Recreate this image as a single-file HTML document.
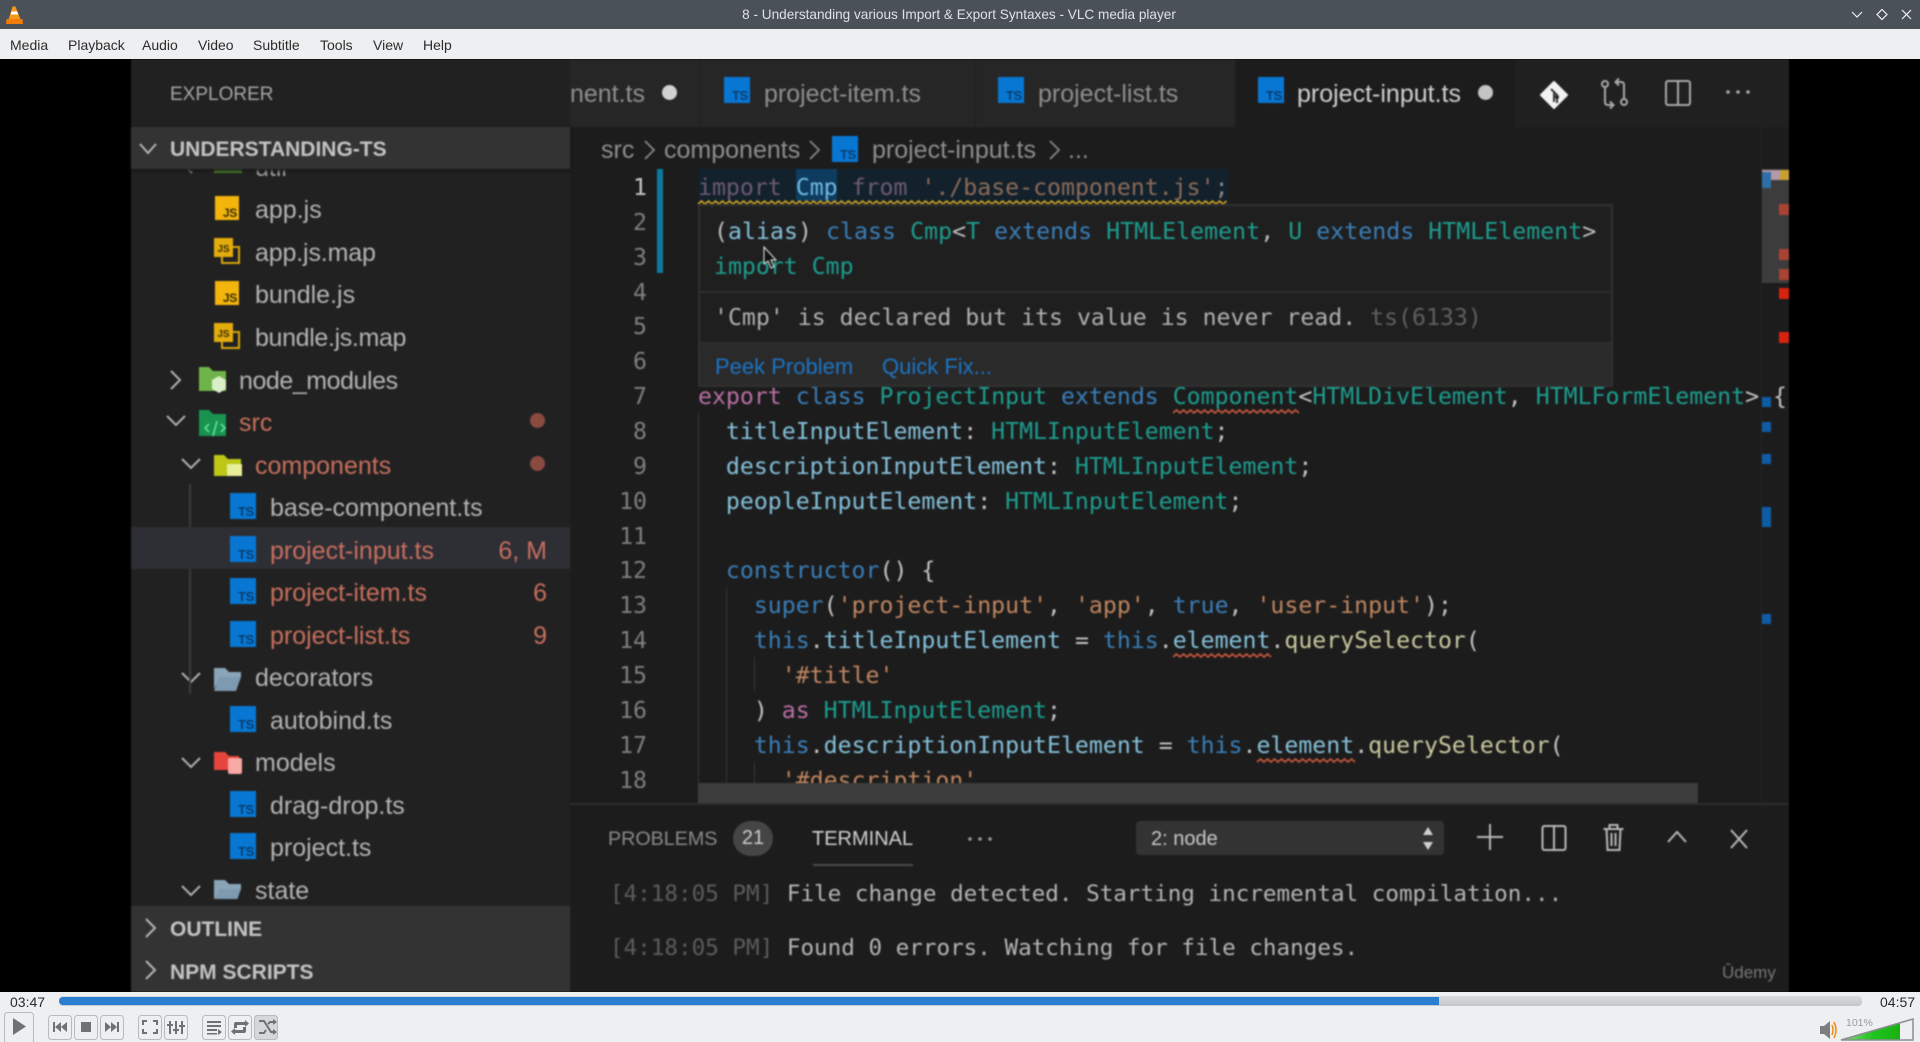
<!DOCTYPE html>
<html><head><meta charset="utf-8"><title>VLC media player</title>
<style>
html,body{margin:0;padding:0;width:1920px;height:1042px;overflow:hidden;background:#eeeff1}
*{box-sizing:border-box}
.a{position:absolute;white-space:pre}
body{font-family:"Liberation Sans",sans-serif;position:relative}
#tb{left:0;top:0;width:1920px;height:29px;background:#4a5159}
#mb{left:0;top:29px;width:1920px;height:30px;background:#eeeff1}
.m{top:37px;font-size:14px;line-height:16px;color:#2c2c2c}
#vid{left:0;top:59px;width:1920px;height:933px;background:#000;overflow:hidden}
#in{left:0;top:-59px;width:1920px;height:1042px;filter:blur(.7px)}
.s{font-size:25px;line-height:34px;color:#b3b3b3;transform:translateY(1px)}
.e{color:#c76f5d}
.h{font-size:21px;line-height:30px;font-weight:bold;color:#c4c4c4;transform:translateY(2px)}
.c{font-family:"DejaVu Sans Mono",monospace;font-size:23.2px;line-height:34px;left:698px;color:#c4c4c4;transform:translateY(2px)}
.n{font-family:"DejaVu Sans Mono",monospace;font-size:23.2px;line-height:34px;color:#7f7f7f;width:60px;left:587px;text-align:right;transform:translateY(2px)}
.ts{position:absolute;width:26px;height:26px;background:#0877d3}
.ts b{position:absolute;right:2px;bottom:0;font:bold 13px/15px "Liberation Sans",sans-serif;color:#083d6e;letter-spacing:-.3px}
.js{position:absolute;width:24px;height:24px;background:#f3b50c}
.js b{position:absolute;right:2px;bottom:0;font:bold 12px/14px "Liberation Sans",sans-serif;color:#3a2e05;letter-spacing:-.3px}
.jm{position:absolute;width:26px;height:26px}
.jm i{position:absolute;left:7px;top:8px;width:19px;height:18px;border:2px solid #d9a50e}
.jm u{position:absolute;left:0;top:0;width:19px;height:19px;background:#e3ac0d;text-decoration:none;font:bold 10px/24px "Liberation Sans",sans-serif;color:#3a2e05;text-align:center}
.k{color:#b96fa3}.b{color:#3a7eb8}.t{color:#1d9d8f}.v{color:#84c0da}.q{color:#bf8560}.f{color:#c9c9a0}
.tab{font-size:25px;line-height:34px;color:#8f8f8f;transform:translateY(1px)}
.bc{font-size:25px;line-height:34px;color:#8e8e8e;transform:translateY(1px)}
.pn{font-size:19.7px;line-height:24px;color:#8a8a8a;transform:translateY(1px)}
.tm{font-family:"DejaVu Sans Mono",monospace;font-size:22.6px;line-height:30px;left:610px;color:#b5b5b5}
.tm span{color:#5c5c5c}
</style></head><body>
<div class="a" id="tb"></div>
<div class="a" id="mb"></div>
<svg class="a" style="left:6px;top:6px" width="17" height="18" viewBox="0 0 17 18"><path d="M6.5 0.5h3l5 13h-12z" fill="#f39a1e"/><path d="M5.6 5.5h5.6l1 3h-7.6z" fill="#fff"/><path d="M0.5 13h16l.5 5H0z" fill="#f07c0a"/></svg>
<div class="a" style="left:740px;top:6px;width:438px;text-align:center;font-size:13.6px;line-height:17px;color:#dfe1e3">8 - Understanding various Import &amp; Export Syntaxes - VLC media player</div>
<svg class="a" style="left:1840px;top:0" width="80" height="29" fill="none" stroke="#f0f0f0" stroke-width="1.2"><path d="M12 12l5 5 5-5"/><path d="M42 9.5l5 5-5 5-5-5z"/><path d="M62 10l9 9M71 10l-9 9"/></svg>
<div class="a m" style="left:10px">Media</div><div class="a m" style="left:68px">Playback</div><div class="a m" style="left:142px">Audio</div><div class="a m" style="left:198px">Video</div><div class="a m" style="left:253px">Subtitle</div><div class="a m" style="left:320px">Tools</div><div class="a m" style="left:373px">View</div><div class="a m" style="left:423px">Help</div>

<div class="a" id="vid"><div class="a" id="in">
<!-- sidebar -->
<div class="a" style="left:131px;top:59px;width:439px;height:933px;background:#212121"></div>
<div class="a" style="left:570px;top:59px;width:1219px;height:933px;background:#1c1c1c"></div>
<div class="a" style="left:570px;top:59px;width:1219px;height:68px;background:#262626"></div>
<div class="a" style="left:700px;top:59px;width:1px;height:68px;background:#1f1f1f"></div>
<div class="a" style="left:975px;top:59px;width:1px;height:68px;background:#1f1f1f"></div>
<div class="a" style="left:1235px;top:59px;width:280px;height:68px;background:#1c1c1c"></div>
<div class="a" style="left:1515px;top:59px;width:274px;height:68px;background:#202020"></div>
<div class="a" style="left:170px;top:79px;font-size:19px;line-height:28px;color:#a6a6a6;transform:translateY(2px)">EXPLORER</div>

<!-- tree -->
<div class="a s" style="left:255px;top:150px;color:#a0a0a0">util</div>
<div class="a" style="left:214px;top:165px;width:28px;height:8px;background:#4d8a2e"></div>
<div class="js" style="left:215px;top:196px"><b>JS</b></div><div class="a s" style="left:255px;top:192px">app.js</div>
<div class="jm" style="left:214px;top:238px"><i></i><u>JS</u></div><div class="a s" style="left:255px;top:235px;letter-spacing:-.15px">app.js.map</div>
<div class="js" style="left:215px;top:281px"><b>JS</b></div><div class="a s" style="left:255px;top:277px">bundle.js</div>
<div class="jm" style="left:214px;top:323px"><i></i><u>JS</u></div><div class="a s" style="left:255px;top:320px;letter-spacing:-.35px">bundle.js.map</div>
<svg class="a" style="left:131px;top:59px" width="130" height="840" viewBox="131 59 130 840" fill="none" stroke="#b0b0b0" stroke-width="2">
<path d="M187 168l5 5" stroke="#8a8a8a"/>
<path d="M171 371l9 9-9 9"/><path d="M167 416l9 9 9-9"/><path d="M182 459l9 9 9-9"/><path d="M182 673l9 9 9-9"/><path d="M182 758l9 9 9-9"/><path d="M182 886l9 9 9-9"/>
<path d="M190 484v210" stroke="#3c3c3c" stroke-width="2"/>
<path d="M199 367h10l4 4h13v20h-27z" fill="#6fb44a" stroke="none"/><path d="M219 376l7 4v9l-7 4-7-4v-9z" fill="#d9efc8" stroke="none"/>
<path d="M199 410h10l4 4h13v22h-27z" fill="#19934f" stroke="none"/><path d="M209 424l-4 4 4 4M221 424l4 4-4 4M217 421l-4 15" stroke="#5fe39a" stroke-width="1.6"/>
<path d="M214 455h10l4 4h13v17h-27z" fill="#bcc716" stroke="none"/><rect x="227" y="464" width="15" height="12" fill="#e9ee9a" stroke="none"/>
<path d="M214 668h11l4 4h12v5h-21l-6 12z" fill="#8aa5b8" stroke="none"/><path d="M219 677h22l-5 14h-22z" fill="#7e9ab0" stroke="none"/>
<path d="M214 752h11l4 4h10v14h-25z" fill="#e5453c" stroke="none"/><rect x="228" y="758" width="14" height="16" rx="2" fill="#f7a9a3" stroke="none"/>
<path d="M214 880h11l4 4h12v5h-21l-6 12z" fill="#8aa5b8" stroke="none"/><path d="M219 889h22l-5 14h-22z" fill="#7e9ab0" stroke="none"/>
</svg>
<div class="a s" style="left:239px;top:363px;letter-spacing:-.45px">node_modules</div>
<div class="a s e" style="left:239px;top:405px">src</div>
<div class="a s e" style="left:255px;top:448px">components</div>
<div class="a" style="left:530px;top:413px;width:15px;height:15px;border-radius:50%;background:#8a4a40"></div>
<div class="a" style="left:530px;top:456px;width:15px;height:15px;border-radius:50%;background:#8a4a40"></div>
<div class="a" style="left:131px;top:527px;width:439px;height:42px;background:#2e2e35"></div>
<div class="ts" style="left:230px;top:493px"><b>TS</b></div><div class="a s" style="left:270px;top:490px">base-component.ts</div>
<div class="ts" style="left:230px;top:536px"><b>TS</b></div><div class="a s e" style="left:270px;top:533px">project-input.ts</div>
<div class="ts" style="left:230px;top:578px"><b>TS</b></div><div class="a s e" style="left:270px;top:575px">project-item.ts</div>
<div class="ts" style="left:230px;top:621px"><b>TS</b></div><div class="a s e" style="left:270px;top:618px">project-list.ts</div>
<div class="a s e" style="right:1373px;top:533px">6, M</div>
<div class="a s e" style="right:1373px;top:575px">6</div>
<div class="a s e" style="right:1373px;top:618px">9</div>
<div class="a s" style="left:255px;top:660px">decorators</div>
<div class="ts" style="left:230px;top:706px"><b>TS</b></div><div class="a s" style="left:270px;top:703px">autobind.ts</div>
<div class="a s" style="left:255px;top:745px">models</div>
<div class="ts" style="left:230px;top:791px"><b>TS</b></div><div class="a s" style="left:270px;top:788px">drag-drop.ts</div>
<div class="ts" style="left:230px;top:833px"><b>TS</b></div><div class="a s" style="left:270px;top:830px">project.ts</div>
<div class="a s" style="left:255px;top:873px">state</div>
<div class="a" style="left:131px;top:127px;width:439px;height:42px;background:#333;box-shadow:0 2px 3px #161616"></div>
<svg class="a" style="left:139px;top:141px" width="18" height="16" fill="none" stroke="#b5b5b5" stroke-width="2"><path d="M1 3l8 9 8-9"/></svg>
<div class="a h" style="left:170px;top:133px">UNDERSTANDING-TS</div>
<div class="a" style="left:131px;top:906px;width:439px;height:86px;background:#333"></div>
<svg class="a" style="left:144px;top:916px" width="16" height="70" fill="none" stroke="#b5b5b5" stroke-width="2"><path d="M2 3l9 9-9 9M2 45l9 9-9 9"/></svg>
<div class="a h" style="left:170px;top:913px">OUTLINE</div>
<div class="a h" style="left:170px;top:956px">NPM SCRIPTS</div>

<!-- tabs -->
<div class="a" style="left:570px;top:59px;width:130px;height:68px;overflow:hidden"><div class="a tab" style="right:55px;top:17px">component.ts</div></div>
<div class="a" style="left:662px;top:85px;width:15px;height:15px;border-radius:50%;background:#d2d2d2"></div>
<div class="ts" style="left:724px;top:77px"><b>TS</b></div><div class="a tab" style="left:764px;top:76px">project-item.ts</div>
<div class="ts" style="left:998px;top:77px"><b>TS</b></div><div class="a tab" style="left:1038px;top:76px">project-list.ts</div>
<div class="ts" style="left:1258px;top:77px"><b>TS</b></div><div class="a tab" style="left:1297px;top:76px;color:#cfcfcf">project-input.ts</div>
<div class="a" style="left:1478px;top:85px;width:15px;height:15px;border-radius:50%;background:#c4c4c4"></div>
<svg class="a" style="left:1530px;top:70px" width="240" height="50" fill="none" stroke="#a8a8a8" stroke-width="2">
<path d="M24 12l13 13-13 13-13-13z" fill="#f2f2f2" stroke="#f2f2f2" stroke-linejoin="round"/><path d="M21 19l6 6v8M24 23v9" stroke="#222" stroke-width="1.8"/><circle cx="27" cy="27" r="2" fill="#222" stroke="none"/>
<circle cx="75" cy="14" r="3"/><path d="M75 17v15q0 3 3 3h5M80 31.500l3.500 3.500-3.500 3.500"/><circle cx="94" cy="32" r="3"/><path d="M94 29V15q0-3-3-3h-5M89 8.500l-3.500 3.500 3.500 3.500"/>
<rect x="136" y="11" width="24" height="24" rx="2"/><path d="M148 11v24"/>
<circle cx="198" cy="22" r="1.8" fill="#a8a8a8" stroke="none"/><circle cx="208" cy="22" r="1.8" fill="#a8a8a8" stroke="none"/><circle cx="218" cy="22" r="1.8" fill="#a8a8a8" stroke="none"/>
</svg>

<!-- breadcrumb -->
<div class="a bc" style="left:601px;top:132px">src</div>
<svg class="a" style="left:640px;top:136px" width="450" height="28" fill="none" stroke="#858585" stroke-width="1.8"><path d="M5 5l9 9-9 9M170 5l9 9-9 9M410 5l9 9-9 9"/></svg>
<div class="a bc" style="left:664px;top:132px">components</div>
<div class="ts" style="left:832px;top:136px"><b>TS</b></div>
<div class="a bc" style="left:872px;top:132px">project-input.ts</div>
<div class="a bc" style="left:1068px;top:132px">...</div>

<!-- editor -->
<div class="a" style="left:698px;top:169px;width:530px;height:32px;background:#13212c"></div>
<div class="a" style="left:796px;top:169px;width:41px;height:32px;background:#0d3c5f"></div>
<div class="a" style="left:657px;top:169px;width:6px;height:104px;background:#0b7a9e"></div>
<div class="a n" style="top:169px;color:#c8c8c8">1</div>
<div class="a n" style="top:204px">2</div>
<div class="a n" style="top:239px">3</div>
<div class="a n" style="top:274px">4</div>
<div class="a n" style="top:308px">5</div>
<div class="a n" style="top:343px">6</div>
<div class="a n" style="top:378px">7</div>
<div class="a n" style="top:413px">8</div>
<div class="a n" style="top:448px">9</div>
<div class="a n" style="top:483px">10</div>
<div class="a n" style="top:518px">11</div>
<div class="a n" style="top:552px">12</div>
<div class="a n" style="top:587px">13</div>
<div class="a n" style="top:622px">14</div>
<div class="a n" style="top:657px">15</div>
<div class="a n" style="top:692px">16</div>
<div class="a n" style="top:727px">17</div>
<div class="a n" style="top:762px">18</div>
<div class="a c" style="top:169px;color:#6d5a72">import <span style="color:#72b7e3">Cmp</span> from <span style="color:#8b6b58">'./base-component.js'</span><span style="color:#8a8a8a">;</span></div>
<div class="a c" style="top:378px"><span class="k">export</span> <span class="b">class</span> <span class="t">ProjectInput</span> <span class="b">extends</span> <span class="t">Component</span>&lt;<span class="t">HTMLDivElement</span>, <span class="t">HTMLFormElement</span>&gt; {</div>
<div class="a c" style="top:413px">  <span class="v">titleInputElement</span>: <span class="t">HTMLInputElement</span>;</div>
<div class="a c" style="top:448px">  <span class="v">descriptionInputElement</span>: <span class="t">HTMLInputElement</span>;</div>
<div class="a c" style="top:483px">  <span class="v">peopleInputElement</span>: <span class="t">HTMLInputElement</span>;</div>
<div class="a c" style="top:552px">  <span class="b">constructor</span>() {</div>
<div class="a c" style="top:587px">    <span class="b">super</span>(<span class="q">'project-input'</span>, <span class="q">'app'</span>, <span class="b">true</span>, <span class="q">'user-input'</span>);</div>
<div class="a c" style="top:622px">    <span class="b">this</span>.<span class="v">titleInputElement</span> = <span class="b">this</span>.<span class="v">element</span>.<span class="f">querySelector</span>(</div>
<div class="a c" style="top:657px">      <span class="q">'#title'</span></div>
<div class="a c" style="top:692px">    ) <span class="k">as</span> <span class="t">HTMLInputElement</span>;</div>
<div class="a c" style="top:727px">    <span class="b">this</span>.<span class="v">descriptionInputElement</span> = <span class="b">this</span>.<span class="v">element</span>.<span class="f">querySelector</span>(</div>
<div class="a c" style="top:762px">      <span class="q">'#description'</span></div>
<svg class="a" style="left:0;top:0" width="1920" height="1042" fill="none">
<path d="M698.500 413v380" stroke="#353535"/><path d="M726.500 587v200" stroke="#353535"/><path d="M754.500 657v34M754.500 762v30" stroke="#353535"/>
<g fill="none" stroke-width="1.700" stroke-linejoin="miter">
<path d="M698 204l3.500-3 3.500 3 3.500-3 3.500 3 3.500-3 3.500 3 3.500-3 3.500 3 3.500-3 3.500 3 3.500-3 3.500 3 3.500-3 3.500 3 3.500-3 3.500 3 3.500-3 3.500 3 3.500-3 3.500 3" stroke="#c9a227"/>
<path d="M768 204l3.500-3 3.500 3 3.500-3 3.500 3 3.500-3 3.500 3 3.500-3 3.500 3 3.500-3 3.500 3 3.500-3 3.500 3 3.500-3 3.500 3 3.500-3 3.500 3 3.500-3 3.500 3 3.500-3 3.500 3" stroke="#c9a227"/>
<path d="M838 204l3.500-3 3.500 3 3.500-3 3.500 3 3.500-3 3.500 3 3.500-3 3.500 3 3.500-3 3.500 3 3.500-3 3.500 3 3.500-3 3.500 3 3.500-3 3.500 3 3.500-3 3.500 3 3.500-3 3.500 3" stroke="#c9a227"/>
<path d="M908 204l3.500-3 3.500 3 3.500-3 3.500 3 3.500-3 3.500 3 3.500-3 3.500 3 3.500-3 3.500 3 3.500-3 3.500 3 3.500-3 3.500 3 3.500-3 3.500 3 3.500-3 3.500 3 3.500-3 3.500 3" stroke="#c9a227"/>
<path d="M978 204l3.500-3 3.500 3 3.500-3 3.500 3 3.500-3 3.500 3 3.500-3 3.500 3 3.500-3 3.500 3 3.500-3 3.500 3 3.500-3 3.500 3 3.500-3 3.500 3 3.500-3 3.500 3 3.500-3 3.500 3" stroke="#c9a227"/>
<path d="M1048 204l3.500-3 3.500 3 3.500-3 3.500 3 3.500-3 3.500 3 3.500-3 3.500 3 3.500-3 3.500 3 3.500-3 3.500 3 3.500-3 3.500 3 3.500-3 3.500 3 3.500-3 3.500 3 3.500-3 3.500 3" stroke="#c9a227"/>
<path d="M1118 204l3.500-3 3.500 3 3.500-3 3.500 3 3.500-3 3.500 3 3.500-3 3.500 3 3.500-3 3.500 3 3.500-3 3.500 3 3.500-3 3.500 3 3.500-3 3.500 3 3.500-3 3.500 3 3.500-3 3.500 3" stroke="#c9a227"/>
<path d="M1188 204l3.500-3 3.500 3 3.500-3 3.500 3 3.500-3 3.500 3 3.500-3 3.500 3 3.500-3 3.500 3 3.500-3" stroke="#c9a227"/>
<path d="M1173 413l3.500-3 3.500 3 3.500-3 3.500 3 3.500-3 3.500 3 3.500-3 3.500 3 3.500-3 3.500 3 3.500-3 3.500 3 3.500-3 3.500 3 3.500-3 3.500 3 3.500-3 3.500 3 3.500-3 3.500 3 3.500-3 3.500 3 3.500-3 3.500 3 3.500-3 3.500 3 3.500-3 3.500 3 3.500-3 3.500 3 3.500-3 3.500 3 3.500-3 3.500 3 3.500-3 3.500 3" stroke="#c9573f"/>
<path d="M1173 657l3.500-3 3.500 3 3.500-3 3.500 3 3.500-3 3.500 3 3.500-3 3.500 3 3.500-3 3.500 3 3.500-3 3.500 3 3.500-3 3.500 3 3.500-3 3.500 3 3.500-3 3.500 3 3.500-3 3.500 3 3.500-3 3.500 3 3.500-3 3.500 3 3.500-3 3.500 3 3.500-3 3.500 3" stroke="#c9573f"/>
<path d="M1257 762l3.500-3 3.500 3 3.500-3 3.500 3 3.500-3 3.500 3 3.500-3 3.500 3 3.500-3 3.500 3 3.500-3 3.500 3 3.500-3 3.500 3 3.500-3 3.500 3 3.500-3 3.500 3 3.500-3 3.500 3 3.500-3 3.500 3 3.500-3 3.500 3 3.500-3 3.500 3 3.500-3 3.500 3" stroke="#c9573f"/>
</g>
</svg>
<!-- minimap -->
<div class="a" style="left:1761px;top:127px;width:1px;height:678px;background:#242424"></div>
<div class="a" style="left:1762px;top:169px;width:27px;height:114px;background:#3c3c3c"></div>
<div class="a" style="left:1762px;top:170px;width:27px;height:10px;background:#b29aa8"></div>
<div class="a" style="left:1780px;top:170px;width:9px;height:10px;background:#c9a030"></div>
<div class="a" style="left:1762px;top:172px;width:9px;height:16px;background:#2f6ea8"></div>
<div class="a" style="left:1779px;top:204px;width:10px;height:11px;background:#a84432"></div>
<div class="a" style="left:1779px;top:249px;width:10px;height:11px;background:#a84432"></div>
<div class="a" style="left:1779px;top:269px;width:10px;height:11px;background:#a84432"></div>
<div class="a" style="left:1779px;top:288px;width:10px;height:11px;background:#d8230f"></div>
<div class="a" style="left:1779px;top:332px;width:10px;height:11px;background:#d8230f"></div>
<div class="a" style="left:1762px;top:397px;width:9px;height:10px;background:#0e5ca6"></div>
<div class="a" style="left:1762px;top:422px;width:9px;height:10px;background:#0e5ca6"></div>
<div class="a" style="left:1762px;top:454px;width:9px;height:10px;background:#0e5ca6"></div>
<div class="a" style="left:1762px;top:507px;width:9px;height:20px;background:#0e5ca6"></div>
<div class="a" style="left:1762px;top:614px;width:9px;height:10px;background:#0e5ca6"></div>
<!-- hover -->
<div class="a" style="left:698px;top:204px;width:915px;height:183px;background:#1f1f1f;border:2px solid #303030"></div>
<div class="a" style="left:700px;top:343px;width:911px;height:42px;background:#2a2a2a"></div>
<div class="a" style="left:700px;top:291px;width:911px;height:2px;background:#2e2e2e"></div>
<div class="a" style="left:700px;top:342px;width:911px;height:2px;background:#2e2e2e"></div>
<div class="a c" style="left:714px;top:213px;color:#bfbfbf;letter-spacing:.04px">(<span class="v">alias</span>) <span class="b">class</span> <span class="t">Cmp</span>&lt;<span class="t">T</span> <span class="b">extends</span> <span class="t">HTMLElement</span>, <span class="t">U</span> <span class="b">extends</span> <span class="t">HTMLElement</span>&gt;</div>
<div class="a c" style="left:714px;top:248px"><span class="t">import Cmp</span></div>
<div class="a c" style="left:714px;top:299px;color:#b0b0b0">'Cmp' is declared but its value is never read. <span style="color:#5f5f5f">ts(6133)</span></div>
<div class="a" style="left:715px;top:350px;font-size:22px;line-height:34px;color:#1c74c4">Peek Problem</div>
<div class="a" style="left:882px;top:350px;font-size:22px;line-height:34px;color:#1c74c4">Quick Fix...</div>
<svg class="a" style="left:763px;top:246px" width="14" height="24"><path d="M1 1v17l4-3 3 7 3-1-3-7h5z" fill="#111" stroke="#eee" stroke-width="1"/></svg>
<!-- scrollbar + panel -->
<div class="a" style="left:698px;top:783px;width:1000px;height:20px;background:#3c3c3c"></div>
<div class="a" style="left:570px;top:803px;width:1219px;height:2px;background:#2c2c2c"></div>
<div class="a pn" style="left:608px;top:826px">PROBLEMS</div>
<div class="a" style="left:733px;top:821px;width:40px;height:35px;border-radius:18px;background:#454545;color:#ccc;font-size:20px;line-height:35px;text-align:center">21</div>
<div class="a pn" style="left:812px;top:826px;color:#d0d0d0;font-size:20px">TERMINAL</div>
<div class="a" style="left:813px;top:864px;width:100px;height:2px;background:#4a4a4a"></div>
<svg class="a" style="left:965px;top:830px" width="30" height="16" fill="#9a9a9a"><circle cx="5" cy="9" r="1.8"/><circle cx="15" cy="9" r="1.8"/><circle cx="25" cy="9" r="1.8"/></svg>
<div class="a" style="left:1136px;top:821px;width:308px;height:34px;border-radius:4px;background:#333"></div>
<div class="a" style="left:1151px;top:825px;font-size:20px;line-height:28px;color:#c8c8c8">2: node</div>
<svg class="a" style="left:1420px;top:822px" width="400" height="34">
<path d="M8 5l5 8H3zM8 28l5-8H3z" fill="#d0d0d0"/>
<g fill="none" stroke="#b8b8b8" stroke-width="2"><path d="M70 2v26M57 15h26"/>
<rect x="122.500" y="4" width="23" height="24" rx="2"/><path d="M134 4v24"/>
<path d="M183.500 7h20M189.500 7V3h8v4M186.500 7l1 21h12l1-21M191.500 11v13M195.500 11v13"/>
<path d="M248 20l9-10 9 10"/><path d="M311 8l16 18M327 8l-16 18"/></g></svg>
<div class="a tm" style="top:879px"><span>[4:18:05 PM]</span> File change detected. Starting incremental compilation...</div>
<div class="a tm" style="top:933px"><span>[4:18:05 PM]</span> Found 0 errors. Watching for file changes.</div>
<div class="a" style="left:1722px;top:962px;font-size:17px;line-height:22px;color:#777">Ûdemy</div>
</div></div>

<!-- controls -->
<div class="a" style="left:10px;top:994px;font-size:14px;line-height:16px;color:#232b33">03:47</div>
<div class="a" style="left:1880px;top:994px;font-size:14px;line-height:16px;color:#232b33">04:57</div>
<div class="a" style="left:59px;top:996px;width:1803px;height:10px;border-radius:4px;background:linear-gradient(#d9dadc,#c6c7ca)"></div>
<div class="a" style="left:59px;top:997px;width:1380px;height:8px;border-radius:4px 0 0 4px;background:#2a7ed2"></div>
<svg class="a" style="left:0;top:1008px" width="300" height="34" viewBox="0 1008 300 34">
<g fill="#eeeff1" stroke="#b9babc">
<rect x="4.500" y="1012.500" width="29" height="31" rx="3"/>
<rect x="48.500" y="1015.500" width="23" height="24" rx="3"/><rect x="74.500" y="1015.500" width="23" height="24" rx="3"/><rect x="100.500" y="1015.500" width="23" height="24" rx="3"/>
<rect x="138.500" y="1015.500" width="23" height="24" rx="3"/><rect x="164.500" y="1015.500" width="23" height="24" rx="3"/>
<rect x="202.500" y="1015.500" width="23" height="24" rx="3"/><rect x="228.500" y="1015.500" width="23" height="24" rx="3"/><rect x="254.500" y="1015.500" width="23" height="24" rx="3" fill="#d6d7d9"/>
</g>
<g fill="#707173">
<path d="M13 1018l13 8.500-13 8.500z"/>
<path d="M53 1022h2v10h-2zM55 1027l6-5v10zM61 1027l6-5v10z"/>
<rect x="81" y="1022" width="10" height="10"/>
<path d="M119 1022h-2v10h2zM117 1027l-6-5v10zM111 1027l-6-5v10z"/>
<path d="M142 1020h5v2h-3v3h-2zM158 1020h-5v2h3v3h2zM142 1034h5v-2h-3v-3h-2zM158 1034h-5v-2h3v-3h2z"/>
<path d="M169 1021h2v13h-2zM175 1021h2v13h-2zM181 1021h2v13h-2zM167 1024h6v2h-6zM173 1029h6v2h-6zM179 1025h6v2h-6z"/>
<path d="M207 1021h14v2h-14zM207 1025h14v2h-14zM207 1029h10v2h-10zM207 1033h10v1.500h-10zM218 1029l4 3-4 3z"/>
<path d="M234 1024q0-2 2-2h9v-2l4 3.500-4 3.500v-2h-8v3h-3zM246 1031q0 2-2 2h-9v2l-4-3.500 4-3.500v2h8v-3h3z"/>
</g>
<path d="M259 1021l5 0 7 11h3M259 1033l5 0 2-3M268 1024l2-2h4" fill="none" stroke="#707173" stroke-width="2"/><path d="M273 1019l4 3-4 3zM273 1029l4 3-4 3z" fill="#707173"/>
</svg>
<svg class="a" style="left:1815px;top:1015px" width="105" height="27">
<path d="M5 11h4l6-5v18l-6-5H5z" fill="#7c7d7f"/><path d="M17 10q2 5 0 10M19 7q4 8 0 16" fill="none" stroke="#f08c12" stroke-width="1.500"/>
<defs><linearGradient id="g" x1="0" x2="1"><stop offset="0" stop-color="#7fdc7f"/><stop offset=".55" stop-color="#1fc41f"/><stop offset="1" stop-color="#18b010"/></linearGradient></defs>
<path d="M26 25L98 4v21z" fill="#eeeff1"/>
<path d="M26 25L85 8v17z" fill="url(#g)"/>
<path d="M26 25L98 4v21z" fill="none" stroke="#8c8d90" stroke-width="1.500"/>
</svg>
<div class="a" style="left:1846px;top:1017px;font-size:10.500px;line-height:13px;color:#9a9a9c">101%</div>
</body></html>
